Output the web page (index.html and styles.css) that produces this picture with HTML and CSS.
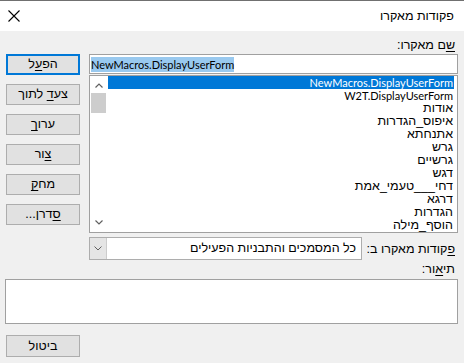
FILE: index.html
```html
<!DOCTYPE html>
<html lang="he">
<head>
    <meta charset="UTF-8">
    <title>פקודות מאקרו</title>
    <link rel="stylesheet" href="styles.css">
</head>
<body>
<div class="dialog">
    <div class="titlebar">
        <svg class="close" width="12" height="12" viewBox="0 0 12 12">
            <path d="M0.5 0.5 L11.5 11.5 M11.5 0.5 L0.5 11.5" stroke="#000" stroke-width="1.1" fill="none"/>
        </svg>
        <span class="title">פקודות מאקרו</span>
    </div>

    <div class="content">
        <div class="main">
            <div class="buttons">
                <button class="btn btn-default">הפ<u>ע</u>ל</button>
                <button class="btn">צע<u>ד</u> לתוך</button>
                <button class="btn">ערו<u>ך</u></button>
                <button class="btn"><u>צ</u>ור</button>
                <button class="btn">מח<u>ק</u></button>
                <button class="btn"><u>ס</u>דרן...</button>
            </div>

            <div class="right">
                <div class="label"><u>ש</u>ם מאקרו:</div>
                <div class="textbox"><span class="sel en">NewMacros.DisplayUserForm</span></div>
                <div class="listbox">
                    <div class="scrollbar">
                        <svg class="arrow" width="8" height="5" viewBox="0 0 8 5"><path d="M0.5 4.5 L4 1 L7.5 4.5" stroke="#606060" stroke-width="1.2" fill="none"/></svg>
                        <div class="thumb"></div>
                        <div class="track"></div>
                        <svg class="arrow" width="8" height="5" viewBox="0 0 8 5"><path d="M0.5 0.5 L4 4 L7.5 0.5" stroke="#606060" stroke-width="1.2" fill="none"/></svg>
                    </div>
                    <ul class="items">
                        <li class="selected"><span class="en">NewMacros.DisplayUserForm</span></li>
                        <li><span class="en">W2T.DisplayUserForm</span></li>
                        <li>אודות</li>
                        <li>איפוס_הגדרות</li>
                        <li>אתנחתא</li>
                        <li>גרש</li>
                        <li>גרשיים</li>
                        <li>דגש</li>
                        <li>דחי___טעמי_אמת</li>
                        <li>דרגא</li>
                        <li>הגדרות</li>
                        <li>הוסף_מילה</li>
                    </ul>
                </div>
                <div class="combo-row">
                    <span class="combo-label"><u>פ</u>קודות מאקרו ב:</span>
                    <div class="combo">
                        <span class="combo-text">כל המסמכים והתבניות הפעילים</span>
                        <span class="combo-btn">
                            <svg width="8" height="5" viewBox="0 0 8 5"><path d="M0.5 0.5 L4 4 L7.5 0.5" stroke="#606060" stroke-width="1" fill="none"/></svg>
                        </span>
                    </div>
                </div>
            </div>
        </div>

        <div class="label desc-label">תי<u>א</u>ור:</div>
        <div class="desc"></div>

        <button class="btn btn-cancel">ביטול</button>
    </div>
</div>
</body>
</html>
```

FILE: styles.css
```css
html, body {
    margin: 0;
    padding: 0;
}

body {
    width: 464px;
    height: 363px;
    background-color: #f0f0f0;
    font-family: "Liberation Sans", "DejaVu Sans", sans-serif;
    font-size: 12.5px;
    color: #000;
    overflow: hidden;
}

/* latin names are narrower in the original */
.en {
    font-family: "Lato", "Liberation Sans", sans-serif;
    font-size: 11px;
}

u {
    text-decoration-thickness: 1px;
    text-underline-offset: 2px;
}

.titlebar {
    height: 30px;
    border-top: 1px solid #707070;
    background-color: #fff;
    display: flex;
    align-items: center;
    justify-content: space-between;
    padding: 0 10px 0 8px;
}

.close {
    display: block;
}

.title {
    direction: rtl;
}

.content {
    padding: 6px 6px 0 6px;
}

.main {
    display: flex;
    gap: 9px;
}

.buttons {
    width: 74px;
    margin-top: 17px;
    display: flex;
    flex-direction: column;
    gap: 9px;
}

.btn {
    font-family: inherit;
    font-size: 12.5px;
    color: #000;
    width: 74px;
    height: 21px;
    padding: 0;
    background-color: #e1e1e1;
    border: 1px solid #adadad;
    direction: rtl;
    line-height: 17px;
}

.btn-default {
    border: 2px solid #0078d7;
}

.right {
    width: 369px;
    display: flex;
    flex-direction: column;
}

.label {
    direction: rtl;
    text-align: right;
    height: 17px;
    line-height: 16px;
    padding-right: 3px;
}

.textbox {
    height: 18px;
    border: 1px solid #a0a0a0;
    background-color: #fff;
    padding-left: 1px;
    display: flex;
    align-items: center;
    margin-bottom: 1px;
}

.sel {
    background-color: #99c9ef;
    line-height: 15px;
}

.listbox {
    height: 156px;
    border: 1px solid #a0a0a0;
    background-color: #fff;
    display: flex;
}

.scrollbar {
    width: 17px;
    display: flex;
    flex-direction: column;
    align-items: center;
    padding-top: 7px;
}

.arrow {
    display: block;
}

.thumb {
    width: 15px;
    height: 20px;
    margin-top: 5px;
    background-color: #cdcdcd;
}

.track {
    flex: 1;
}

.scrollbar .arrow:last-child {
    margin-bottom: 7px;
}

.items {
    list-style: none;
    margin: 0;
    padding: 0 3px 0 1px;
    flex: 1;
    direction: rtl;
    text-align: right;
}

.items li {
    height: 13px;
    line-height: 13px;
    padding-right: 1px;
    white-space: nowrap;
}

.items .selected {
    background-color: #0078d7;
    color: #fff;
}

.combo-row {
    margin-top: 4px;
    display: flex;
    flex-direction: row-reverse;
    align-items: center;
    justify-content: space-between;
}

.combo-label {
    direction: rtl;
    padding-right: 3px;
}

.combo {
    width: 271px;
    height: 21px;
    border: 1px solid #adadad;
    background-color: #fff;
    display: flex;
    flex-direction: row-reverse;
}

.combo-text {
    flex: 1;
    direction: rtl;
    text-align: right;
    line-height: 21px;
    padding-right: 5px;
}

.combo-btn {
    width: 16px;
    background-color: #e5e5e5;
    border-right: 1px solid #cccccc;
    display: flex;
    align-items: center;
    justify-content: center;
}

.desc-label {
    margin-top: 1px;
    height: 18px;
    line-height: 16px;
}

.desc {
    margin-left: -1px;
    height: 43px;
    border: 1px solid #a0a0a0;
    background-color: #fff;
}

.btn-cancel {
    display: block;
    margin-top: 11px;
    height: 22px;
}
```
